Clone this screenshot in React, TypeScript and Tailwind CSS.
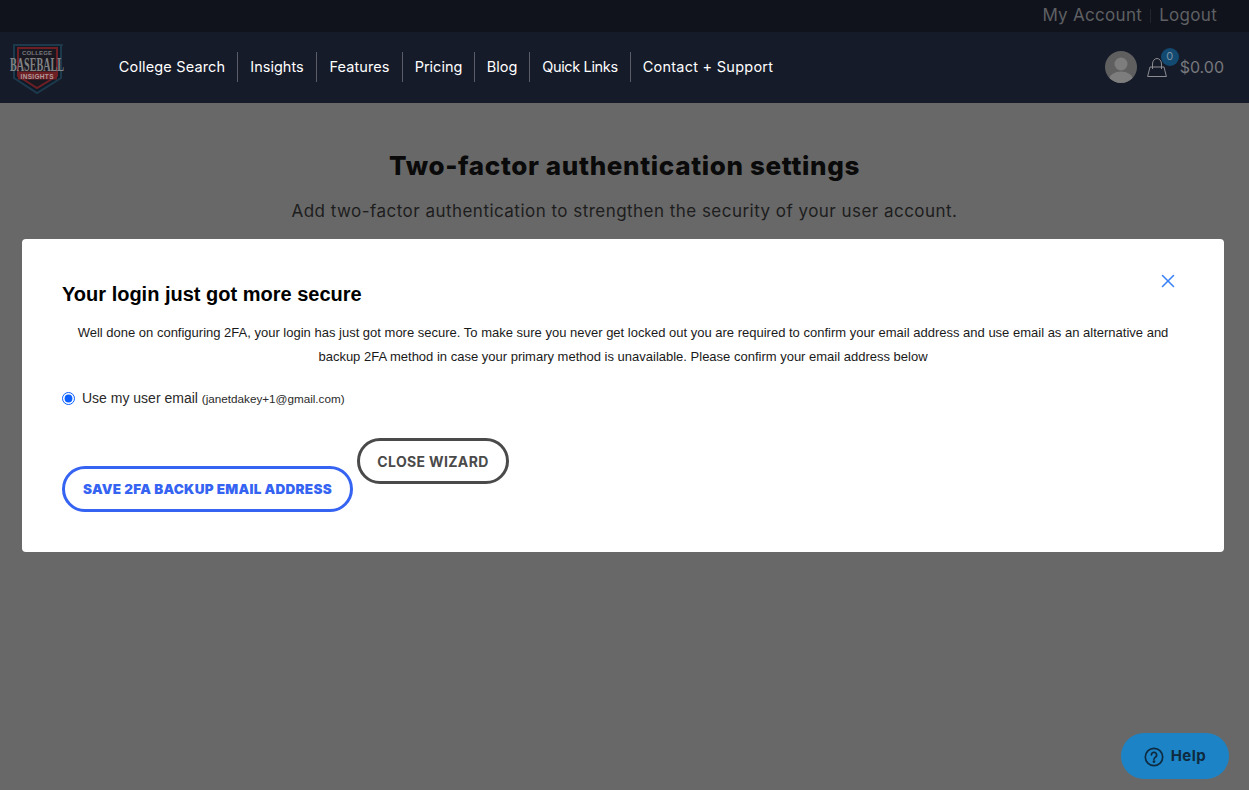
import { X } from "lucide-react";

const links = [
  { label: "College Search", cls: "w-[131px] tracking-[0.15px] border-r" },
  { label: "Insights", cls: "w-[79px] border-r" },
  { label: "Features", cls: "w-[86px] tracking-[0.1px] border-r" },
  { label: "Pricing", cls: "w-[72px] border-r" },
  { label: "Blog", cls: "w-[55px] border-r" },
  { label: "Quick Links", cls: "w-[101px] tracking-[-0.35px] border-r" },
  { label: "Contact + Support", cls: "w-[154px] tracking-[0.25px]" },
];

function Logo() {
  return (
    <svg width="62" height="52" viewBox="0 0 62 52" className="mt-[5px] block">
      <path d="M8 2 H55 V35 L31 50 L8 35 Z" fill="#0e1a28" stroke="#1d3a4c" strokeWidth="2" />
      <path d="M12 5 H51 V33 L31 45 L12 33 Z" fill="#191820" stroke="#6e1f24" strokeWidth="2" />
      <text x="31" y="12" textAnchor="middle" fontSize="6" fontWeight="700" fill="#77797e" textLength="30" fontFamily="'Liberation Sans', sans-serif">COLLEGE</text>
      <text x="31" y="27.5" textAnchor="middle" fontSize="18" fontWeight="700" fill="#808285" textLength="54" lengthAdjust="spacingAndGlyphs" fontFamily="'Liberation Serif', serif">BASEBALL</text>
      <rect x="12" y="28.5" width="39" height="8" fill="#6e1f24" />
      <text x="31" y="35.5" textAnchor="middle" fontSize="6.5" fontWeight="700" fill="#b09a9c" textLength="33" fontFamily="'Liberation Sans', sans-serif">INSIGHTS</text>
      <circle cx="56" cy="2" r="1" fill="#1d3a4c" />
    </svg>
  );
}

function Avatar() {
  return (
    <svg width="32" height="32" viewBox="0 0 32 32" className="block">
      <clipPath id="av"><circle cx="16" cy="16" r="16" /></clipPath>
      <g clipPath="url(#av)">
        <rect width="32" height="32" fill="#5f5f5f" />
        <circle cx="16" cy="13" r="6.5" fill="#7d7d7d" />
        <ellipse cx="16" cy="29" rx="12" ry="8.5" fill="#7d7d7d" />
      </g>
    </svg>
  );
}

function Bag() {
  return (
    <svg width="20" height="19" viewBox="0 0 20 19" fill="none" stroke="#8c8d92" strokeWidth="1" className="block">
      <path d="M3 9 H17 L19.4 18.5 H0.6 Z" strokeLinejoin="round" />
      <path d="M5.5 11 V6 a4.5 5.5 0 0 1 9 0 V11" />
    </svg>
  );
}

export default function App() {
  return (
    <div className="relative h-[790px] w-full overflow-hidden bg-[#686868] font-['Inter',sans-serif]">
      <div className="flex h-[32px] items-center justify-end bg-[#10131c] pr-[32px] text-[17px] tracking-[0.3px] text-[#5f6063]">
        <span>My Account</span>
        <span className="mx-[8px] h-[14px] w-px bg-[#22252d]" />
        <span>Logout</span>
      </div>
      <header className="flex h-[71px] items-center bg-[#161b29] pb-[2px] pl-[6px] pr-[25px]">
        <Logo />
        <nav className="ml-[39px] flex items-center text-[14.5px] text-white">
          {links.map((l) => (
            <a key={l.label} className={`flex h-[30px] items-center justify-center border-[#5a5d68] ${l.cls}`}>
              {l.label}
            </a>
          ))}
        </nav>
        <div className="ml-auto flex items-center">
          <Avatar />
          <div className="relative ml-[10px] mt-[1px] flex">
            <Bag />
            <span className="absolute -right-[12px] -top-[10px] flex h-[18px] w-[18px] items-center justify-center rounded-full bg-[#134a72] text-[11px] text-[#7d93a5]">0</span>
          </div>
          <span className="ml-[13px] text-[16px] text-[#77787c]">$0.00</span>
        </div>
      </header>
      <main className="flex flex-col items-center pt-[44px] text-center">
        <h1 className="text-[26px] font-extrabold leading-[38px] tracking-[0.65px] text-[#0a0a0a]">Two-factor authentication settings</h1>
        <p className="mt-[13px] text-[17px] leading-[26px] tracking-[0.47px] text-[#1d1d1d]">Add two-factor authentication to strengthen the security of your user account.</p>
      </main>

      <div className="absolute left-[22px] top-[239px] h-[313px] w-[1202px] rounded-[4px] bg-white px-[40px] pt-[42px] font-['Liberation_Sans',sans-serif]">
        <button className="absolute right-[45px] top-[31px] text-[#3b82f6]"><X size={22} strokeWidth={1.7} /></button>
        <h2 className="text-[20px] font-bold leading-[26px] text-black">Your login just got more secure</h2>
        <p className="mt-[14px] text-center text-[13px] leading-[24px] text-[#1a1a1a]">
          Well done on configuring 2FA, your login has just got more secure. To make sure you never get locked out you are required to confirm your email address and use email as an alternative and<br />
          backup 2FA method in case your primary method is unavailable. Please confirm your email address below
        </p>
        <label className="mt-[17px] flex h-[24px] items-center text-[14px] text-[#2a2a2a]">
          <input type="radio" defaultChecked className="m-0 h-[13px] w-[13px] accent-[#0b5fff]" />
          <span className="ml-[7px]">Use my user email <span className="text-[11.7px]">(janetdakey+1@gmail.com)</span></span>
        </label>
        <div className="mt-[28px] flex items-start gap-[4px]">
          <button className="mt-[28px] h-[46px] w-[291px] rounded-full border-[3px] border-[#3563f2] bg-white font-['Inter',sans-serif] text-[13.5px] font-black tracking-[0.27px] text-[#3563f2]">SAVE 2FA BACKUP EMAIL ADDRESS</button>
          <button className="h-[46px] w-[152px] rounded-full border-[3px] border-[#4a4a4a] bg-white font-['Inter',sans-serif] text-[14px] font-bold tracking-[0.35px] text-[#4a4a4a]">CLOSE WIZARD</button>
        </div>
      </div>

      <button className="absolute bottom-[11px] right-[20px] flex h-[46px] w-[108px] items-center justify-center gap-[7px] rounded-full bg-[#1c84c6] pt-[1px] text-[15px] font-bold tracking-[0.5px] text-[#0e2a40]">
        <svg width="20" height="20" viewBox="0 0 20 20" fill="none" stroke="#0e2a40" strokeWidth="1.7">
          <circle cx="10" cy="10" r="8.7" />
          <path d="M7.4 8 a2.6 2.6 0 1 1 3.9 2.2 c-.9.5-1.3 1-1.3 2" strokeLinecap="round" />
          <circle cx="10" cy="14.6" r="0.6" fill="#0e2a40" />
        </svg>
        Help
      </button>
    </div>
  );
}
